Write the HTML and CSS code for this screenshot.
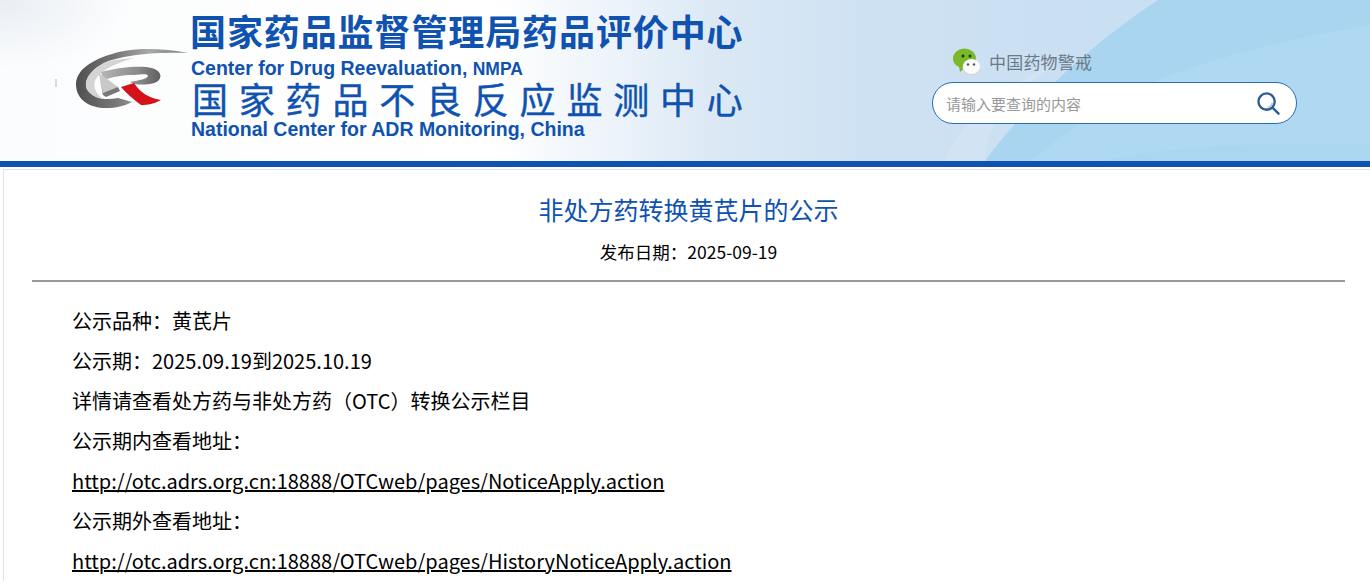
FILE: index.html
```html
<!DOCTYPE html>
<html lang="zh-CN">
<head>
    <meta charset="UTF-8">
    <title>非处方药转换黄芪片的公示</title>
    <link rel="stylesheet" href="styles.css">
</head>
<body>
    <!-- Banner -->
    <header class="banner">
        <svg class="banner-shapes" viewBox="0 0 1370 161" preserveAspectRatio="none">
            <path d="M945 161 C960 120 1000 90 1060 60 C1010 95 985 125 985 161 Z" fill="#d2e4f4"/>
            <path d="M985 161 C1030 100 1090 45 1158 0 H1370 V161 Z" fill="#a9d5f0"/>
            <path d="M1030 161 C1080 120 1130 90 1170 75 C1240 50 1310 35 1370 25 V161 Z" fill="#afd8f2"/>
            <path d="M1100 161 C1180 145 1280 142 1370 144 V161 Z" fill="#aad6f0"/>
        </svg>
        <div class="brand">
            <svg class="logo" viewBox="-20 0 136 64">
                <defs>
                    <linearGradient id="swoosh" x1="0" y1="0" x2="1" y2="0">
                        <stop offset="0" stop-color="#4f4f4f"/>
                        <stop offset="0.35" stop-color="#777"/>
                        <stop offset="0.65" stop-color="#a8a8a8"/>
                        <stop offset="1" stop-color="#7d7d7d"/>
                    </linearGradient>
                    <linearGradient id="loop" x1="0" y1="0" x2="1" y2="0">
                        <stop offset="0" stop-color="#b5b5b5"/>
                        <stop offset="0.6" stop-color="#8c8c8c"/>
                        <stop offset="1" stop-color="#5f5f5f"/>
                    </linearGradient>
                </defs>
                <path d="M-18 33 V41" stroke="#b5b5b5" stroke-width="1"/>
                <path d="M114 7 C88 2 58 1 38 8 C14 15 2 26 2 38 C2 54 16 62 32 62 C42 62 50 60 58 56 L44 52 C34 54 22 54 15 46 C7 37 16 24 30 17 C50 8 86 6 114 7 Z" fill="url(#swoosh)"/>
                <path d="M30 17 C16 24 7 37 15 46 C19 50 24 52 29 53 C20 46 16 36 27 27 C34 21 46 16 60 12 C50 13 39 13 30 17 Z" fill="#d4d4d4"/>
                <path d="M27 26 C45 21 62 20 72 21 C85 22 89 29 85 34 C80 39 70 39 60 38 L56 36 C66 34 73 33 74 30 C74 28 70 28 60 29 C48 29 38 31 30 34 Z" fill="url(#loop)"/>
                <path d="M25 27 L44 41 L29 49 Z" fill="#c9c9c9"/>
                <path d="M25 27 L29 49 L32 51 L46 45 L44 41 L29 47 Z" fill="#777"/>
                <path d="M47 41 L60 37 C66 46 74 52 87 54 C80 58 74 59 67 59 C60 54 53 48 47 41 Z" fill="#d3121b"/>
            </svg>
            <div class="brand-text">
                <div class="name-cn">国家药品监督管理局药品评价中心</div>
                <div class="name-en">Center for Drug Reevaluation, <small>NMPA</small></div>
                <div class="name-cn name-wide">国家药品不良反应监测中心</div>
                <div class="name-en">National Center for ADR Monitoring, China</div>
            </div>
        </div>
        <div class="tools">
            <div class="wechat">
                <svg class="wechat-icon" viewBox="0 0 28 28">
                    <ellipse cx="11.5" cy="10.5" rx="11.5" ry="10" fill="#7ab92a"/>
                    <path d="M6 18 L7 24 L13 19 Z" fill="#7ab92a"/>
                    <circle cx="10" cy="8" r="1.5" fill="#26380c"/>
                    <circle cx="17" cy="8" r="1.5" fill="#26380c"/>
                    <ellipse cx="18.5" cy="19.5" rx="9" ry="8" fill="#d5d8da"/>
                    <ellipse cx="18.5" cy="18.5" rx="8.5" ry="7.5" fill="#fbfbfb"/>
                    <circle cx="15" cy="16.5" r="1.2" fill="#555"/>
                    <circle cx="21" cy="16.5" r="1.2" fill="#555"/>
                </svg>
                <span>中国药物警戒</span>
            </div>
            <div class="search">
                <input class="search-input" type="text" placeholder="请输入要查询的内容">
                <svg class="search-icon" viewBox="0 0 24 24">
                    <circle cx="10" cy="10" r="8.5" fill="#fff" stroke="#2d5a94" stroke-width="2.4"/>
                    <path d="M11 16 A6 6 0 0 0 16 11" fill="none" stroke="#a9cbe6" stroke-width="1.5"/>
                    <path d="M16.5 16.5 L22.5 22.5" stroke="#2d5a94" stroke-width="2.5" stroke-linecap="round"/>
                </svg>
            </div>
        </div>
    </header>
    <div class="banner-bar"></div>

    <!-- Article -->
    <main class="article">
        <h1 class="article-title">非处方药转换黄芪片的公示</h1>
        <div class="article-date">发布日期：2025-09-19</div>
        <div class="article-body">
            <p>公示品种：黄芪片</p>
            <p>公示期：2025.09.19到2025.10.19</p>
            <p>详情请查看处方药与非处方药（OTC）转换公示栏目</p>
            <p>公示期内查看地址：</p>
            <p><a href="#">http://otc.adrs.org.cn:18888/OTCweb/pages/NoticeApply.action</a></p>
            <p>公示期外查看地址：</p>
            <p><a href="#">http://otc.adrs.org.cn:18888/OTCweb/pages/HistoryNoticeApply.action</a></p>
        </div>
    </main>
</body>
</html>
```

FILE: styles.css
```css
html, body {
    height: 100%;
    overflow: hidden;
}

body {
    margin: 0;
    background-color: #fff;
    font-family: "Noto Sans CJK SC", "Noto Sans", sans-serif;
    color: #000;
}

/* Banner */
.banner {
    position: relative;
    display: flex;
    justify-content: space-between;
    height: 161px;
    background:
        radial-gradient(ellipse 130px 70px at 0 0, #e9eef4 0%, rgba(255, 255, 255, 0) 100%),
        linear-gradient(90deg, #fbfcfd 0%, #fff 36%, #eef4fa 44%, #dce9f5 52%, #cfe2f3 62%, #c9dff2 80%);
}

.banner-shapes {
    position: absolute;
    top: 0;
    left: 0;
    width: 100%;
    height: 100%;
}

.brand {
    position: relative;
    display: flex;
    padding: 12px 0 0 54px;
}

.logo {
    width: 136px;
    height: 64px;
    margin-top: 34px;
}

.brand-text {
    color: #0f52b0;
    font-family: "Liberation Sans", "Noto Sans CJK SC", sans-serif;
    font-weight: bold;
}

.name-cn {
    width: 552px;
    height: 46px;
    font-size: 36px;
    line-height: 44px;
    letter-spacing: 0.9px;
    white-space: nowrap;
}

.name-wide {
    height: 40px;
    padding-left: 2px;
    font-family: "Noto Sans CJK SC", sans-serif;
    font-weight: normal;
    line-height: 38px;
    letter-spacing: 10.8px;
    -webkit-text-stroke: 0.4px #0f52b0;
}

.name-en {
    height: 21px;
    padding-left: 1px;
    font-size: 19.5px;
    line-height: 21px;
    white-space: nowrap;
}

.name-en small {
    font-size: 17.5px;
}

.tools {
    position: relative;
    width: 365px;
    margin-right: 73px;
    padding-top: 42px;
}

.wechat {
    display: flex;
    align-items: center;
    gap: 8px;
    box-sizing: border-box;
    height: 40px;
    padding: 0 0 2px 21px;
    color: #6b7a88;
    font-size: 17px;
    letter-spacing: 0.2px;
}

.wechat-icon {
    width: 28px;
    height: 28px;
    margin-top: 1px;
}

.search {
    display: flex;
    align-items: center;
    box-sizing: border-box;
    height: 42px;
    padding: 0 16px 0 13px;
    background-color: #fff;
    border: 1px solid #2a6db0;
    border-radius: 21px;
}

.search-input {
    flex: 1;
    padding: 0;
    border: none;
    outline: none;
    background: transparent;
    font-family: "Noto Sans CJK SC", sans-serif;
    font-size: 15px;
}

.search-input::placeholder {
    color: #999;
    opacity: 1;
}

.search-icon {
    width: 23px;
    height: 23px;
}

.banner-bar {
    height: 6px;
    background-color: #0f52b0;
}

/* Article */
.article {
    margin: 2px 0 0 3px;
    padding: 0 25px 0 28px;
    border-top: 1px solid #e6e3ec;
    border-left: 1px solid #e2e2e2;
}

.article-title {
    margin: 0;
    padding-top: 18px;
    color: #0f52b0;
    font-size: 25px;
    font-weight: normal;
    line-height: 42px;
    text-align: center;
}

.article-date {
    padding: 10px 0 16px;
    border-bottom: 2px solid #999;
    font-size: 17.5px;
    line-height: 24px;
    text-align: center;
}

.article-body {
    padding: 19px 0 0 40px;
    font-size: 20px;
}

.article-body p {
    margin: 0;
    line-height: 40px;
}

.article-body a {
    color: #000;
}
```
